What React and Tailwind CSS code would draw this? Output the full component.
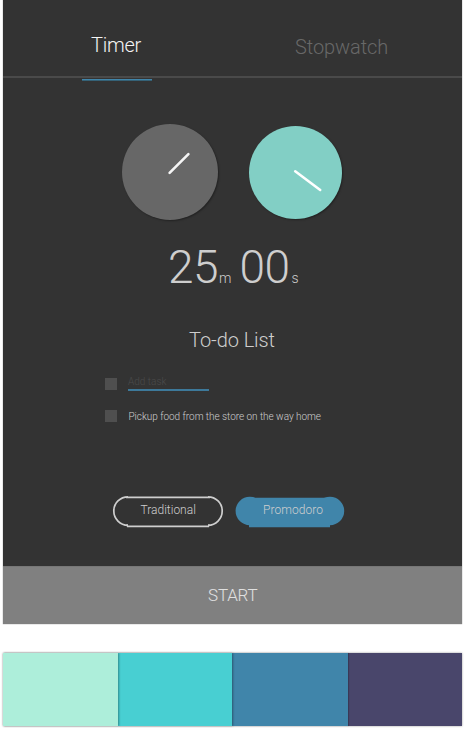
function Tabs() {
  return (
    <nav className="flex h-[81px] flex-col">
      <div className="flex h-[76px] items-start text-[20px] leading-[24px]">
        <button className="ml-[88px] mt-[33px] w-[52px] whitespace-nowrap text-left tracking-[-0.25px] text-[#f4f4f4]">Timer</button>
        <button className="ml-[152px] mt-[35px] whitespace-nowrap text-left tracking-[-0.08px] text-[#686868]">Stopwatch</button>
      </div>
      <div className="h-[2px] shrink-0 bg-[#4a4a4a]" />
      <div className="ml-[79px] mt-[1px] h-[2px] w-[70px] shrink-0 border-b border-[#356277] bg-[#4085aa]" />
    </nav>
  );
}

function Dials() {
  return (
    <div className="mt-[43px] flex h-[96px] items-center pl-[119px]">
      <div className="size-[96px] rounded-full bg-[#676767] shadow-[1px_1px_2px_rgba(0,0,0,0.35)]">
        <svg className="size-full" viewBox="0 0 96 96">
          <path d="M47.6 48.8L66.4 30.2" stroke="#f5f5f5" strokeWidth="2.6" strokeLinecap="round" />
        </svg>
      </div>
      <div className="ml-[31px] size-[93px] rounded-full bg-[#82cfc5] shadow-[1px_1px_2px_rgba(0,0,0,0.35)]">
        <svg className="size-full" viewBox="0 0 93 93">
          <path d="M46.2 45.3L71.2 64" stroke="#fff" strokeWidth="2.6" strokeLinecap="round" />
        </svg>
      </div>
    </div>
  );
}

function Time() {
  return (
    <div className="mt-[20px] flex h-[54px] items-baseline pl-[165px] text-[46px] leading-[54px] text-[#cecece]">
      <span className="w-[51px] tracking-[-0.5px]">25</span>
      <span className="w-[20.5px] text-[14px]">m</span>
      <span className="w-[52px] tracking-[-0.5px]">00</span>
      <span className="text-[14px]">s</span>
    </div>
  );
}

function Todo() {
  return (
    <section>
      <h2 className="mt-[34px] h-[24px] pl-[186px] text-[20px] leading-[24px] tracking-[-0.08px] text-[#cecece]">To-do List</h2>
      <div className="mt-[22px] flex h-[20px] pl-[102px] text-[10px] leading-[12px]">
        <span className="mt-[4px] h-[12px] w-[12px] bg-[#4f4f4f]" />
        <div className="ml-[11px] h-[17px] w-[81px] border-b-2 border-[#3d799a] pt-[2px] text-[#4b4b4b]">Add task</div>
      </div>
      <div className="mt-[16px] flex h-[12px] pl-[102px] text-[10px] leading-[13px]">
        <span className="h-[12px] w-[12px] bg-[#4f4f4f]" />
        <span className="ml-[11.5px] whitespace-nowrap tracking-[-0.035px] text-[#cecece]">Pickup food from the store on the way home</span>
      </div>
    </section>
  );
}

function Modes() {
  return (
    <div className="mt-[73px] flex h-[34px] pl-[109px] text-[12px] leading-[14px] text-[#cecece]">
      <button className="relative h-[34px] w-[112px] pl-[28.5px] pb-[5px] text-left">
        <svg className="absolute inset-0" width="112" height="34" viewBox="0 0 112 34" fill="none" stroke="#cecece" strokeWidth="1.7">
          <path d="M16 1.8A14.2 14.2 0 0 0 16 30.2M96 1.8A14.2 14.2 0 0 1 96 30.2M14 2.3H98M15 31.3H97" />
          <path d="M15 29.5V31.5M97 29.5V31.5" strokeWidth="1" />
        </svg>
        <span className="relative">Traditional</span>
      </button>
      <button className="relative ml-[11px] h-[34px] w-[111px] pl-[28px] pb-[5px] text-left">
        <svg className="absolute inset-0" width="111" height="34" viewBox="0 0 111 34" fill="#4085aa">
          <circle cx="14.8" cy="16" r="14.2" />
          <circle cx="95" cy="16" r="14.2" />
          <path d="M14 2.8H95V32.2H14Z" />
        </svg>
        <span className="relative tracking-[0.05px]">Promodoro</span>
      </button>
    </div>
  );
}

export default function App() {
  return (
    <div className="h-[729px] w-[465px] overflow-hidden bg-white pl-[3px] font-['Roboto',sans-serif] font-light">
      <main className="h-[624px] w-[458.5px] overflow-hidden bg-[#333] shadow-[0_0_1px_rgba(0,0,0,0.5)]">
        <div className="h-[566px]">
          <Tabs />
          <Dials />
          <Time />
          <Todo />
          <Modes />
        </div>
        <button className="block h-[58px] w-full border-t border-[#777] bg-[#808080] pl-[205px] text-left text-[17px] leading-[57px] tracking-[-0.2px] text-[#e0e0e0]">START</button>
      </main>
      <div className="mt-[29px] flex h-[73px] w-[459px] shadow-[0_0_2px_rgba(0,0,0,0.4)]">
        <div className="z-30 w-[115px] bg-[#adeeda] shadow-[1px_0_2px_rgba(0,0,0,0.35)]" />
        <div className="z-20 w-[114px] bg-[#48cfd2] shadow-[1px_0_2px_rgba(0,0,0,0.35)]" />
        <div className="z-10 w-[115.5px] bg-[#4085aa] shadow-[1px_0_1px_rgba(0,0,0,0.2)]" />
        <div className="flex-1 bg-[#49466b]" />
      </div>
    </div>
  );
}
